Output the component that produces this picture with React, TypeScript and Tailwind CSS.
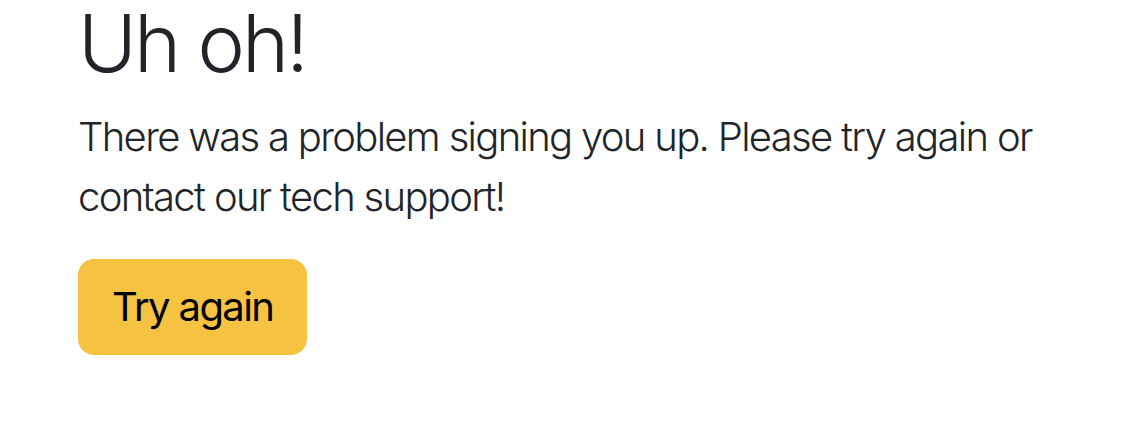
export default function App() {
  return (
    <div className="min-h-screen bg-white font-['Inter',sans-serif] text-[#212529]">
      <div className="px-[78px]">
        <h1 className="mb-[21px] text-[80px] font-light leading-[86px] tracking-[-0.037em]">Uh oh!</h1>
        <p className="mb-8 text-[40px] font-light leading-[1.5] tracking-[-0.042em]">
          There was a problem signing you up. Please try again or contact our tech support!
        </p>
        <button
          type="button"
          className="rounded-2xl border-2 border-[#f5c242] bg-[#f5c242] px-8 py-4 text-[40px] leading-[1.5] tracking-[-0.04em] text-black"
        >
          Try again
        </button>
      </div>
    </div>
  );
}
